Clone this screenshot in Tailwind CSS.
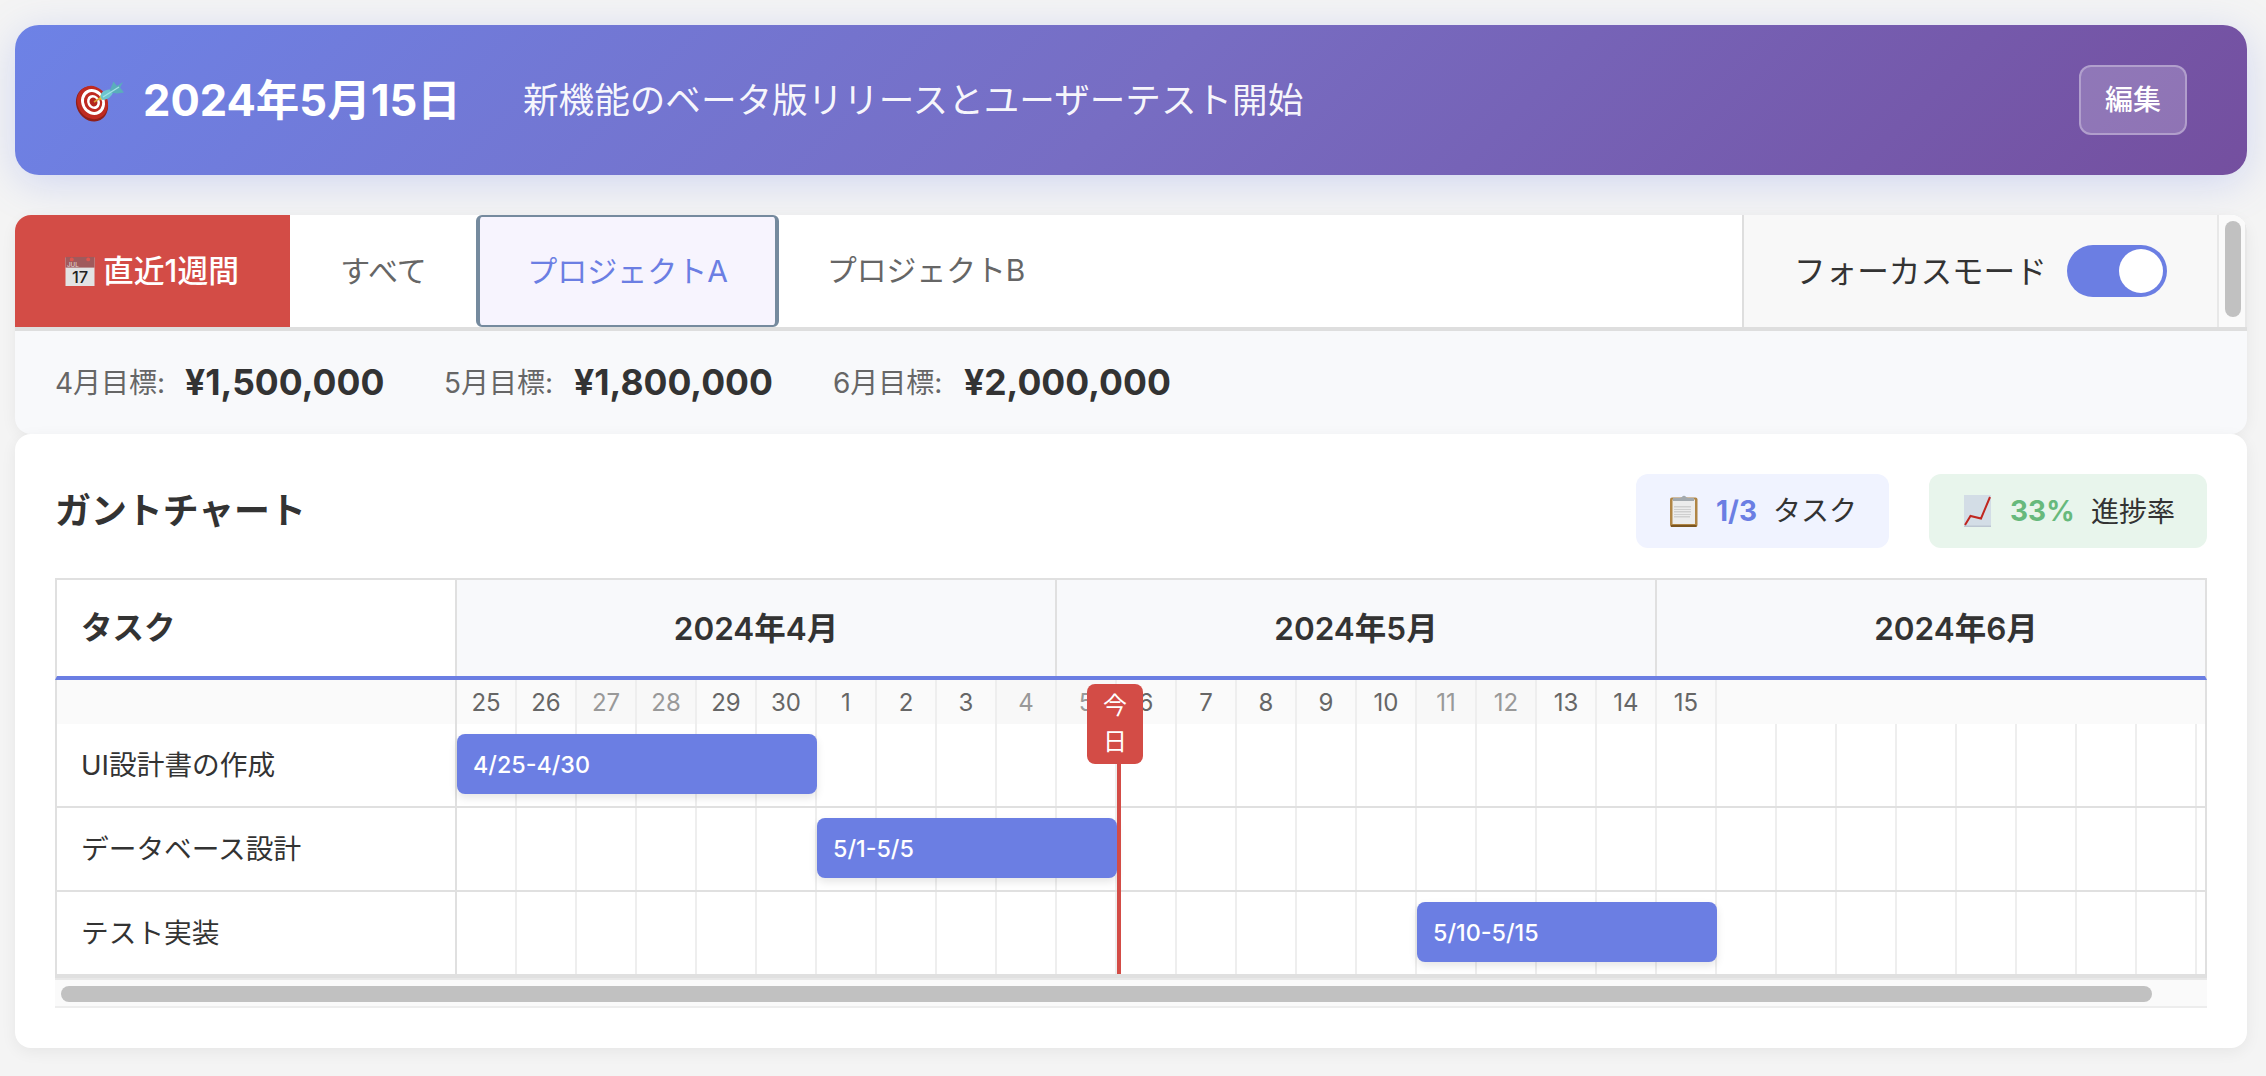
<!DOCTYPE html>
<html lang="ja">
<head>
<meta charset="utf-8">
<title>ガントチャート</title>
<script src="https://cdn.jsdelivr.net/npm/@tailwindcss/browser@4"></script>
</head>
<body class="w-[2266px] h-[1076px] overflow-hidden bg-[#f4f4f4] pt-[25px] pl-[15px] pr-[19px] font-['Inter','Noto_Sans_CJK_JP',sans-serif] text-[#333] leading-none whitespace-nowrap">

<header class="flex items-center h-[150px] rounded-[24px] pl-[60px] pr-[60px] bg-[linear-gradient(135deg,#6d82e6_0%,#776dc3_50%,#744f9f_100%)] shadow-[0_8px_40px_rgba(102,126,234,0.25)] text-white">
  <svg class="w-[50px] h-[44px] mt-1" viewBox="0 0 50 44">
    <ellipse cx="17" cy="24" rx="15.5" ry="18" transform="rotate(-28 17 24)" fill="#8f1f1a"/>
    <ellipse cx="17.500" cy="22.5" rx="15" ry="17" transform="rotate(-28 17.500 22.500)" fill="#bf2a21"/>
    <ellipse cx="18" cy="22" rx="11.6" ry="13.3" transform="rotate(-28 18 22)" fill="#fff"/>
    <ellipse cx="18" cy="22" rx="8.8" ry="10.2" transform="rotate(-28 18 22)" fill="#bf2a21"/>
    <ellipse cx="18.5" cy="22" rx="6.2" ry="7.3" transform="rotate(-28 18.5 22)" fill="#fff"/>
    <ellipse cx="18.5" cy="22" rx="3.8" ry="4.6" transform="rotate(-28 18.5 22)" fill="#b3251d"/>
    <path d="M19 22l8-5" stroke="#d9a53a" stroke-width="1.6"/>
    <path d="M24 20l1.500-5 4 4z" fill="#e7c33a"/>
    <path d="M25.500 17c0-5 4-7 9-7.500l4 1.500c-1 5-6 9-11 9z" fill="#6cc5cf"/>
    <path d="M35 10L38.500 1.500l3.500 4.500 6-4-3 5.500 4 5-7 1-6-1z" fill="#5aaebb"/>
    <path d="M28 17L44 7" stroke="#a5e3e6" stroke-width="1.3"/>
  </svg>
  <h1 class="ml-[18px] w-[380px] pt-[2px] text-[43.5px] font-bold">2024年5月15日</h1>
  <p class="pt-px text-[35.6px] text-white/95">新機能のベータ版リリースとユーザーテスト開始</p>
  <button class="ml-auto w-[108px] h-[70px] rounded-[12px] border-2 border-white/30 bg-white/20 text-[28px] font-medium">編集</button>
</header>

<section class="mt-[40px] rounded-[20px] shadow-[0_4px_16px_rgba(0,0,0,0.06)]">
  <nav class="flex h-[116px] border-b-4 border-[#dedede] bg-white rounded-t-[16px] overflow-hidden text-[30px] text-[#666]">
    <div class="flex items-center w-[275px] bg-[#d34c46] text-white text-[30.8px] font-medium pl-[50px]">
      <svg class="w-[30px] h-[32px] mr-[8px]" viewBox="0 0 31 32">
        <rect x="0.5" y="2" width="30" height="29.5" fill="#e3e3e3"/>
        <path d="M.5 1.500h30v11H.5z" fill="#a05a5c"/>
        <circle cx="7" cy="4" r="2" fill="#e0554d"/><circle cx="24" cy="4" r="2" fill="#e0554d"/>
        <text x="2" y="11.500" font-size="6.500" fill="#dcc" font-family="Inter">JUL</text>
        <text x="15.500" y="28" font-size="17" text-anchor="middle" fill="#222" font-family="Inter">17</text>
      </svg>
      直近1週間
    </div>
    <div class="flex items-center justify-center w-[186px] pl-px">すべて</div>
    <div class="flex items-center justify-center w-[303px] rounded-[6px] border-x-4 border-y-2 border-[#758a9e] bg-[#f7f4fe] text-[#6b7ee3]">プロジェクトA</div>
    <div class="flex items-center pl-[48px] text-[29.8px]">プロジェクトB</div>
    <div class="ml-auto flex items-center w-[475px] border-l-2 border-[#dedede] bg-[#f8f8f8] pl-[50px] text-[31.6px] text-[#333]">
      <span class="pt-px">フォーカスモード</span>
      <div class="flex justify-end w-[100px] h-[52px] ml-auto mr-[50px] p-1 rounded-full bg-[#6b7ee3]"><div class="size-[44px] rounded-full bg-white"></div></div>
    </div>
    <div class="w-[30px] border-x-2 border-[#e8e8e8] bg-[#fafafa] pt-[6px] pl-[6px]"><div class="w-[16px] h-[96px] rounded-full bg-[#c1c1c1]"></div></div>
  </nav>
  <div class="flex items-center h-[103px] rounded-b-[16px] bg-[#f8f9fb] pl-[40px] pt-px text-[28px] text-[#666]">
    <div class="flex items-center w-[389px]"><span class="w-[130px]">4月目標:</span><b class="text-[35.5px] text-[#333]">¥1,500,000</b></div>
    <div class="flex items-center w-[389px]"><span class="w-[130px]">5月目標:</span><b class="text-[35.5px] text-[#333]">¥1,800,000</b></div>
    <div class="flex items-center w-[389px]"><span class="w-[131px]">6月目標:</span><b class="text-[35.5px] text-[#333]">¥2,000,000</b></div>
  </div>
</section>

<main class="h-[614px] rounded-[16px] bg-white px-[40px] pt-[40px] shadow-[0_4px_16px_rgba(0,0,0,0.06)]">
  <div class="flex items-center h-[74px] text-[28px]">
    <h2 class="pt-[2px] text-[35.9px] font-bold">ガントチャート</h2>
    <div class="ml-auto flex items-center w-[253px] h-[74px] rounded-[12px] bg-[#f0f3ff] pl-[33px]">
      <svg class="w-[30px] h-[34px]" viewBox="0 0 30 34">
        <rect x="1" y="3.500" width="27.500" height="29.500" rx="2" fill="#b08545"/>
        <path d="M2 31h25.500v2H2z" fill="#7c5620"/>
        <path d="M3.500 5.500h22.500v24.500H3.500z" fill="#ececec"/>
        <path d="M5 12h17v1.500H5zM5 15h17v1H5zM5 17h17v1.500H5zM5 20h17v1H5zM5 22h16v1.500H5z" fill="#cfcfcf"/>
        <path d="M4 7V4h7l2-1a2.200 2.200 0 0 1 4 0l2 1h6v3z" fill="#a3a9ae"/>
      </svg>
      <b class="ml-[17px] w-[57px] text-[#6b7ee3]">1/3</b><span>タスク</span>
    </div>
    <div class="ml-[40px] flex items-center w-[278px] h-[74px] rounded-[12px] bg-[#e8f5ec] pl-[34px]">
      <svg class="w-[29px] h-[34px]" viewBox="0 0 29 34">
        <path d="M1 1h27v32H1z" fill="#d3dde6"/>
        <path d="M1 31.500h27V33H1z" fill="#bcc6d2"/>
        <path d="M2 31L7.500 22l10.500 2.500L27 3" fill="none" stroke="#c0261f" stroke-width="2"/>
      </svg>
      <b class="ml-[18px] w-[81px] text-[#67b97c]">33%</b><span class="pt-px">進捗率</span>
    </div>
  </div>

  <div class="relative mt-[30px] w-[2152px] h-[400px] overflow-hidden border-b-4 border-[#e0e0e0]">
    <div class="flex h-[102px] border-2 border-b-4 border-[#e0e0e0] border-b-[#6b7ee3] bg-[#f8f9fb] text-[31.5px] font-semibold overflow-hidden">
      <div class="flex items-center shrink-0 w-[400px] bg-white border-r-2 border-[#e0e0e0] pl-[24px] text-[31.500px] font-bold">タスク</div>
      <div class="flex items-center justify-center shrink-0 w-[600px] pt-px border-r-2 border-[#e0e0e0]">2024年4月</div>
      <div class="flex items-center justify-center shrink-0 w-[600px] pt-px border-r-2 border-[#e0e0e0]">2024年5月</div>
      <div class="flex items-center justify-center shrink-0 w-[598px] pt-px">2024年6月</div>
    </div>
    <div class="border-x-2 border-[#e0e0e0]">
      <div id="days" class="flex h-[44px] bg-[#fafafa] text-[24px] text-[#666]">
        <div class="w-[400px] border-r-2 border-[#e0e0e0]"></div>
      </div>
      <div id="rows"></div>
    </div>
    <div class="absolute left-[1062px] top-[106px] w-[4px] h-[292px] bg-[#d34c46]"></div>
    <div class="absolute left-[1032px] top-[106px] w-[56px] h-[80px] rounded-[8px] bg-[#d34c46] text-white text-[24px] leading-[36px] text-center pt-[4px]">今<br>日</div>
  </div>
  <div class="h-[30px] border-y-2 border-t-[#e8e8e8] border-b-[#ededed] bg-[#fafafa] pt-[6px] pl-[6px]"><div class="w-[2091px] h-[16px] rounded-full bg-[#c1c1c1]"></div></div>
</main>

<script>
const days = [25,26,27,28,29,30,1,2,3,4,5,6,7,8,9,10,11,12,13,14,15];
const off = [27,28,4,5,11,12];
document.getElementById('days').insertAdjacentHTML('beforeend', days.map(d =>
  `<div class="flex items-center justify-center w-[60px] pt-[2px] border-r-2 border-[#eee] ${off.includes(d) ? 'bg-[#f8f8f8] text-[#999]' : ''}">${d}</div>`).join(''));
const tasks = [['UI設計書の作成', '4/25-4/30', 0, 6], ['データベース設計', '5/1-5/5', 6, 5], ['テスト実装', '5/10-5/15', 16, 5]];
document.getElementById('rows').innerHTML = tasks.map(([name, label, start, len]) => `
  <div class="flex h-[84px] border-b-2 border-[#e0e0e0]">
    <div class="flex items-center shrink-0 w-[400px] border-r-2 border-[#e0e0e0] pl-[24px] pt-[2px] text-[27.7px]">${name}</div>
    <div class="flex-1 pt-[10px] bg-[repeating-linear-gradient(to_right,transparent_0,transparent_58px,#eee_58px,#eee_60px)]">
      <div class="flex items-center h-[60px] rounded-[8px] bg-[#6b7ee3] pl-[16px] pt-[2px] text-[23.3px] font-medium text-white shadow-[0_4px_8px_rgba(0,0,0,0.1)]" style="margin-left:${start * 60}px;width:${len * 60}px">${label}</div>
    </div>
  </div>`).join('');
</script>
</body>
</html>
